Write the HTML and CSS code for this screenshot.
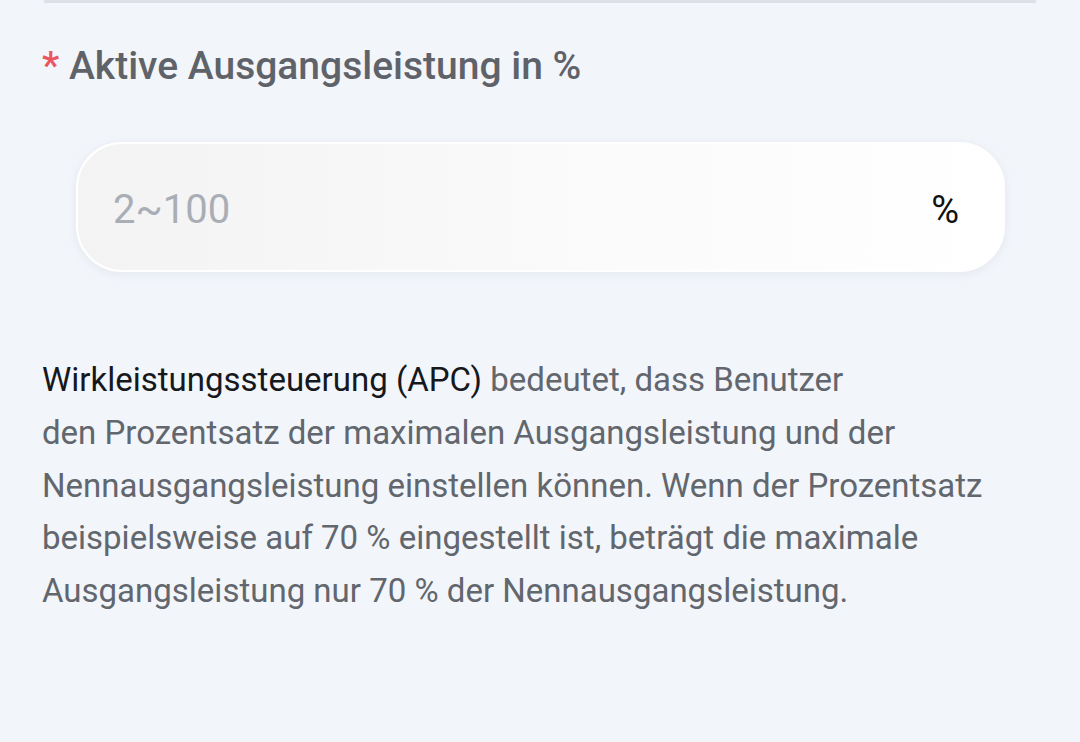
FILE: index.html
```html
<!DOCTYPE html>
<html lang="de">
<head>
<meta charset="utf-8">
<link rel="stylesheet" href="styles.css">
</head>
<body>
<div class="page">
  <div class="divider"></div>
  <div class="field">
    <div class="label"><span class="req">*</span> Aktive Ausgangsleistung in %</div>
    <div class="input">
      <span class="placeholder">2~100</span>
      <span class="unit">%</span>
    </div>
  </div>
  <p class="desc"><span class="strong">Wirkleistungssteuerung (APC)</span> bedeutet, dass Benutzer<br>den Prozentsatz der maximalen Ausgangsleistung und der Nennausgangsleistung einstellen können. Wenn der Prozentsatz beispielsweise auf 70 % eingestellt ist, beträgt die maximale Ausgangsleistung nur 70 % der Nennausgangsleistung.</p>
</div>
</body>
</html>
```
FILE: styles.css
```css
html, body {
  margin: 0;
  padding: 0;
  background: #f2f5fa;
}
body {
  font-family: Roboto, "Noto Sans", sans-serif;
  width: 1080px;
  height: 742px;
  overflow: hidden;
}
.page {
  padding: 0 44px 0 42px;
}
.divider {
  height: 3px;
  background: #dde1e7;
  margin-left: 2px;
}
.field {
  padding-top: 40px;
}
.label {
  font-size: 39px;
  font-weight: 500;
  color: #5f6369;
  line-height: 46px;
}
.req {
  color: #ea5560;
}
.input {
  box-sizing: border-box;
  margin: 53px 31px 0 34px;
  height: 130px;
  border: 2px solid #ffffff;
  border-radius: 46px;
  background: linear-gradient(90deg, #f3f3f4 0%, #fbfbfb 60%, #ffffff 100%);
  box-shadow: 0 2px 8px rgba(200, 208, 220, 0.35);
  display: flex;
  align-items: center;
  justify-content: space-between;
  padding: 5px 44px 0 35px;
}
.placeholder {
  font-size: 40px;
  color: #a9aeb6;
}
.unit {
  font-size: 38px;
  color: #111;
}
.desc {
  margin: 82px 0 0;
  font-size: 33px;
  line-height: 52.8px;
  color: #62666d;
  max-width: 980px;
}
.strong {
  color: #16181c;
}
```
